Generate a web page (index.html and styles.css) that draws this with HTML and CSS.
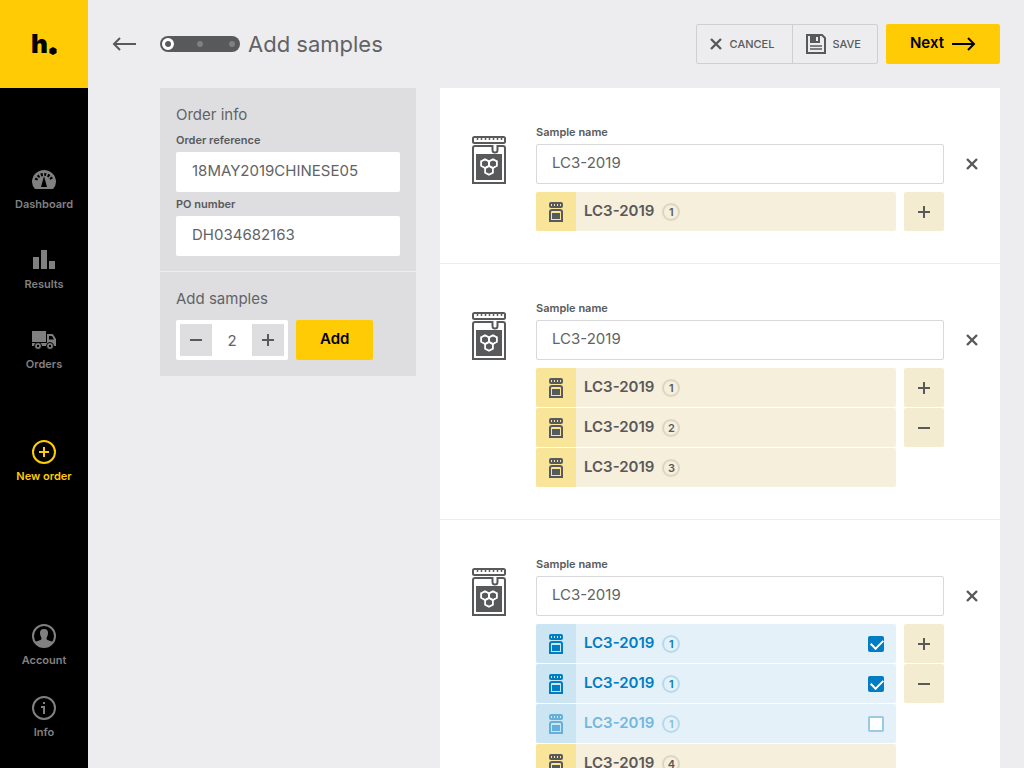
FILE: index.html
```
<!DOCTYPE html>
<html lang="en">
<head>
<meta charset="utf-8">
<meta name="viewport" content="width=device-width, initial-scale=1">
<title>Add samples</title>
<link rel="stylesheet" href="styles.css">
</head>

<body>
<!-- icons used more than once -->
<svg class="sprite" width="0" height="0">
	<symbol id="jar" viewBox="0 0 34 48">
		<path d="M1 2.500Q1 1 2.500 1H31.500Q33 1 33 2.500V5.500Q33 7 31.500 7H2.500Q1 7 1 5.500Z" fill="none" stroke="currentColor" stroke-width="2"/>
		<path d="M5.500 2V4M9.500 2V4M13.500 2V4M17.500 2V4M21.500 2V4M25.500 2V4M29.500 2V4" stroke="currentColor" stroke-width="1.500"/>
		<path d="M1 47V12Q1 10 3 10H20.500V14Q20.500 16.500 23 16.500Q25.500 16.500 25.500 14V10H31Q33 10 33 12V47Z" fill="none" stroke="currentColor" stroke-width="2"/>
		<path d="M4 18H30V44H4Z" fill="currentColor"/>
		<g fill="none" stroke="#fff" stroke-width="1.800">
			<path d="M13 23.200L16.900 25.400V29.800L13 32L9.100 29.800V25.400Z"/>
			<path d="M21 23.200L24.900 25.400V29.800L21 32L17.100 29.800V25.400Z"/>
			<path d="M17 30L20.900 32.200V36.600L17 38.800L13.100 36.600V32.200Z"/>
		</g>
	</symbol>
	<symbol id="vial" viewBox="0 0 14 20">
		<path d="M2 0H12Q14 0 14 2V4Q14 6 12 6H2Q0 6 0 4V2Q0 0 2 0ZM2 2V4H3V2ZM5 2V4H6V2ZM8 2V4H9V2ZM11 2V4H12V2Z" fill="currentColor" fill-rule="evenodd"/>
		<path d="M1 19V10Q1 8 3 8H11Q13 8 13 10V19Z" fill="none" stroke="currentColor" stroke-width="2"/>
		<path d="M3 11H11V17H3Z" fill="currentColor"/>
	</symbol>
	<symbol id="plus" viewBox="0 0 12 12"><path d="M0 6H12M6 0V12" stroke="currentColor" stroke-width="2"/></symbol>
	<symbol id="minus" viewBox="0 0 12 12"><path d="M0 6H12" stroke="currentColor" stroke-width="2"/></symbol>
	<symbol id="cross" viewBox="0 0 12 12"><path d="M1 1L11 11M11 1L1 11" stroke="currentColor" stroke-width="2.400"/></symbol>
</svg>

<div class="app">
	<aside class="sidebar">
		<a class="logo" href="#" aria-label="Home"><span>h</span><svg width="8" height="8" viewBox="0 0 8 8"><path d="M4 0L7.600 2V6L4 8L0.400 6V2Z"/></svg></a>

		<nav class="menu">
			<a href="#">
				<svg width="24" height="24" viewBox="0 0 24 24">
					<path d="M3 21Q0 17.500 0 14A12 12 0 0 1 24 14Q24 17.500 21 21Z" fill="currentColor"/>
					<path d="M12 8L15 19H9Z" fill="#000"/>
					<path d="M4 12A8.500 8.500 0 0 1 20 12" fill="none" stroke="#000" stroke-width="3" stroke-dasharray="2 1.500"/>
				</svg>
				Dashboard
			</a>
			<a href="#">
				<svg width="24" height="24" viewBox="0 0 24 24"><path d="M1 9H7V21H1ZM9 2H15V21H9ZM17 13H23V21H17Z" fill="currentColor"/></svg>
				Results
			</a>
			<a href="#">
				<svg width="24" height="24" viewBox="0 0 24 24">
					<path d="M0 3H14V14H0ZM15 6H20Q21 6 21.500 7L24 11V18H0V15H15ZM17 8V11.500H22L20 8Z" fill="currentColor" fill-rule="evenodd"/>
					<g fill="currentColor" stroke="#000"><circle cx="6" cy="18" r="3.500"/><circle cx="18" cy="18" r="3.500"/></g>
					<circle cx="6" cy="18" r="1.200"/><circle cx="18" cy="18" r="1.200"/>
				</svg>
				Orders
			</a>
		</nav>

		<nav class="menu menu-new">
			<a class="active" href="#">
				<svg width="24" height="24" viewBox="0 0 24 24" fill="none" stroke="currentColor" stroke-width="2"><circle cx="12" cy="12" r="11"/><path d="M7 12H17M12 7V17"/></svg>
				New order
			</a>
		</nav>

		<nav class="menu menu-bottom">
			<a href="#">
				<svg width="24" height="24" viewBox="0 0 24 24">
					<circle cx="12" cy="12" r="11" fill="none" stroke="currentColor" stroke-width="2"/>
					<path d="M12 5C15 5 16.300 7 16 9.500C15.800 12 14.500 13 14.500 14.500C14.500 17 20 16.500 21 18.500C19 21.500 15.500 23 12 23S5 21.500 3 18.500C4 16.500 9.500 17 9.500 14.500C9.500 13 8.200 12 8 9.500C7.700 7 9 5 12 5Z" fill="currentColor"/>
				</svg>
				Account
			</a>
			<a href="#">
				<svg width="24" height="24" viewBox="0 0 24 24" fill="none" stroke="currentColor" stroke-width="2"><circle cx="12" cy="12" r="11"/><path d="M9 11H12V18M11 7H13"/></svg>
				Info
			</a>
		</nav>
	</aside>

	<div class="page">
		<header class="topbar">
			<a class="back" href="#" aria-label="Back"><svg width="24" height="14" viewBox="0 0 24 14" fill="none" stroke="currentColor" stroke-width="2"><path d="M24 7H2M8 1L2 7L8 13"/></svg></a>
			<svg class="steps" width="80" height="16" viewBox="0 0 80 16">
				<rect width="80" height="16" rx="8" fill="#58595b"/>
				<circle cx="8" cy="8" r="4.500" fill="#58595b" stroke="#fff" stroke-width="3"/>
				<circle cx="40" cy="8" r="3" fill="#808083"/><circle cx="72" cy="8" r="3" fill="#808083"/>
			</svg>
			<h1>Add samples</h1>
			<div class="actions">
				<button type="button" class="btn-line"><svg width="12" height="12"><use href="#cross"/></svg>CANCEL</button>
				<button type="button" class="btn-line btn-save">
					<svg width="20" height="20" viewBox="0 0 20 20">
						<path d="M1 1H16L19 4V19H1Z" fill="none" stroke="currentColor" stroke-width="2"/>
						<path d="M4 1H14V9H4ZM10 3V7H12V3Z" fill="currentColor" fill-rule="evenodd"/>
						<path d="M4 12H16M4 15H16" stroke="currentColor" stroke-width="1.500"/>
					</svg>SAVE
				</button>
			</div>
			<button type="button" class="btn btn-next">Next<svg width="24" height="14" viewBox="0 0 24 14" fill="none" stroke="currentColor" stroke-width="2"><path d="M0 7H22M16 1L22 7L16 13"/></svg></button>
		</header>

		<main class="columns">
			<form class="panel">
				<section>
					<h2>Order info</h2>
					<label for="ref">Order reference</label>
					<input type="text" id="ref" value="18MAY2019CHINESE05">
					<label for="po">PO number</label>
					<input type="text" id="po" value="DH034682163">
				</section>
				<section>
					<h2>Add samples</h2>
					<div class="add">
						<div class="counter">
							<button type="button" aria-label="Less"><svg width="12" height="12"><use href="#minus"/></svg></button>
							<input type="text" value="2" aria-label="Number of samples">
							<button type="button" aria-label="More"><svg width="12" height="12"><use href="#plus"/></svg></button>
						</div>
						<button type="button" class="btn btn-add">Add</button>
					</div>
				</section>
			</form>

			<form class="samples">
				<section class="sample">
					<svg class="jar" width="34" height="48"><use href="#jar"/></svg>
					<div class="fields">
						<label for="name1">Sample name</label>
						<input type="text" id="name1" value="LC3-2019">
						<div class="vials">
							<ul>
								<li><i><svg width="14" height="20"><use href="#vial"/></svg></i><b>LC3-2019</b><em>1</em></li>
							</ul>
							<div class="tools">
								<button type="button" aria-label="Add vial"><svg width="12" height="12"><use href="#plus"/></svg></button>
							</div>
						</div>
					</div>
					<button type="button" class="remove" aria-label="Remove sample"><svg width="12" height="12"><use href="#cross"/></svg></button>
				</section>

				<section class="sample">
					<svg class="jar" width="34" height="48"><use href="#jar"/></svg>
					<div class="fields">
						<label for="name2">Sample name</label>
						<input type="text" id="name2" value="LC3-2019">
						<div class="vials">
							<ul>
								<li><i><svg width="14" height="20"><use href="#vial"/></svg></i><b>LC3-2019</b><em>1</em></li>
								<li><i><svg width="14" height="20"><use href="#vial"/></svg></i><b>LC3-2019</b><em>2</em></li>
								<li><i><svg width="14" height="20"><use href="#vial"/></svg></i><b>LC3-2019</b><em>3</em></li>
							</ul>
							<div class="tools">
								<button type="button" aria-label="Add vial"><svg width="12" height="12"><use href="#plus"/></svg></button>
								<button type="button" aria-label="Remove vial"><svg width="12" height="12"><use href="#minus"/></svg></button>
							</div>
						</div>
					</div>
					<button type="button" class="remove" aria-label="Remove sample"><svg width="12" height="12"><use href="#cross"/></svg></button>
				</section>

				<section class="sample">
					<svg class="jar" width="34" height="48"><use href="#jar"/></svg>
					<div class="fields">
						<label for="name3">Sample name</label>
						<input type="text" id="name3" value="LC3-2019">
						<div class="vials">
							<ul>
								<li class="blue"><i><svg width="14" height="20"><use href="#vial"/></svg></i><label for="v1">LC3-2019</label><em>1</em><input type="checkbox" id="v1" checked></li>
								<li class="blue"><i><svg width="14" height="20"><use href="#vial"/></svg></i><label for="v2">LC3-2019</label><em>1</em><input type="checkbox" id="v2" checked></li>
								<li class="blue off"><i><svg width="14" height="20"><use href="#vial"/></svg></i><label for="v3">LC3-2019</label><em>1</em><input type="checkbox" id="v3"></li>
								<li><i><svg width="14" height="20"><use href="#vial"/></svg></i><b>LC3-2019</b><em>4</em></li>
							</ul>
							<div class="tools">
								<button type="button" aria-label="Add vial"><svg width="12" height="12"><use href="#plus"/></svg></button>
								<button type="button" aria-label="Remove vial"><svg width="12" height="12"><use href="#minus"/></svg></button>
							</div>
						</div>
					</div>
					<button type="button" class="remove" aria-label="Remove sample"><svg width="12" height="12"><use href="#cross"/></svg></button>
				</section>
			</form>
		</main>
	</div>
</div>
</body>
</html>
```
FILE: styles.css
```
*{margin:0; padding:0; box-sizing:border-box;}
body{font-family:Inter, "Liberation Sans", sans-serif; font-size:15px; color:#58595b; background:#ededef;}
button, input{font:inherit; color:inherit; border:0; background:none;}
button{cursor:pointer;}
a{color:inherit; text-decoration:none;}
svg{display:block; flex:none;}
ul{list-style:none;}
i, em{font-style:normal;}
.sprite{position:absolute;}

.app{display:flex; height:100vh;}

/* sidebar */
.sidebar{width:88px; flex:none; display:flex; flex-direction:column; background:#000; color:#808080; padding-bottom:24px;}
.logo{height:88px; flex:none; display:flex; align-items:center; justify-content:center; background:#ffcb05; color:#000;}
.logo span{font-size:26px; font-weight:900; line-height:32px;}
.logo svg{margin:13px 0 0 1px;}
.menu{display:flex; flex-direction:column; gap:32px; padding-top:80px;}
.menu a{display:flex; flex-direction:column; align-items:center; height:48px; font-size:11px; font-weight:600; line-height:24px;}
.menu-new{padding-top:64px;}
.menu-bottom{margin-top:auto; padding-top:0; gap:24px;}
.menu .active{color:#ffcb05;}

/* top bar */
.page{flex:1; min-width:0; overflow-y:auto; scrollbar-width:none;}
.topbar{display:flex; align-items:center; height:88px; padding:0 24px;}
.steps{margin:0 8px 0 24px;}
h1{font-size:22px; font-weight:400; line-height:32px; color:#626365;}
.actions{display:flex; margin:0 8px 0 auto; border:1px solid #cfcfd1; border-radius:2px;}
.btn-line{display:flex; align-items:center; gap:8px; height:38px; padding:0 18px 0 13px; font-size:11px; font-weight:500;}
.btn-save{border-left:1px solid #cfcfd1; gap:6px; padding:0 16px 0 13px;}
.btn{height:40px; padding:0 24px 3px; border-radius:2px; background:#ffcb05; color:#000; font-weight:600;}
.btn-next{display:flex; align-items:center; gap:8px;}
.btn-next svg{margin-top:3px;}

/* columns */
.columns{display:flex; align-items:flex-start; gap:24px; padding:0 24px 24px 72px;}
.panel{width:256px; flex:none; background:#dedee0;}
.panel section{padding:16px;}
.panel section + section{border-top:1px solid #ededef;}
.panel section:first-child{padding-bottom:15px;}
h2{padding-bottom:2px; font-size:15px; font-weight:400; line-height:22px; color:#626365;}
label{display:block; font-size:11px; font-weight:600; line-height:24px;}
input[type=text]{display:block; width:100%; height:40px; padding:0 16px 3px; border-radius:2px; background:#fff; font-weight:400; color:#626365;}
.add{display:flex; gap:8px; margin-top:8px;}
.counter{display:flex; width:112px; padding:4px; border-radius:2px; background:#fff;}
.counter button{width:32px; height:32px; flex:none; display:flex; align-items:center; justify-content:center; background:#dedee0;}
.counter input[type=text]{height:32px; padding:0; text-align:center;}

/* samples */
.samples{flex:1; min-width:0; background:#fff;}
.sample{display:flex; padding:32px 0 31px 32px; border-bottom:1px solid #ededef;}
.jar{margin:16px 30px 0 0;}
.fields{flex:1; min-width:0;}
.fields > input[type=text]{border:1px solid #d9d9db; padding:0 15px 3px;}
.remove{width:56px; height:40px; margin-top:24px; display:flex; align-items:center; justify-content:center;}
.vials{display:flex; gap:8px; margin-top:8px;}
.vials ul{flex:1;}
.vials li{display:flex; align-items:center; height:39px; margin-bottom:1px; border-radius:2px; background:#f6efdc;}
.vials i{width:40px; height:39px; display:flex; align-items:center; justify-content:center; border-radius:2px 0 0 2px; background:#f9e59a;}
.vials b, .vials label{margin:0 8px; padding-bottom:2px; font-size:15px; font-weight:600; line-height:24px;}
.vials em{width:18px; height:18px; border:2px solid #ddd5c3; border-radius:50%; font-size:11px; font-weight:600; line-height:14px; text-align:center;}
.vials .blue{background:#e4f1f9; color:#007dc3;}
.blue i{background:#cce5f3;}
.blue em{border-color:#b5daed;}
.off svg, .off label{opacity:.5;}
.off em{color:#80bee1;}
.blue input{appearance:none; width:16px; height:16px; margin:0 12px 0 auto; border:2px solid #99cbe7; border-radius:2px; background:#fff;}
.blue input:checked{border-color:#007dc3; background:#007dc3;}
.blue input:checked::before{content:""; display:block; width:10px; height:6px; margin:1px; border:solid #fff; border-width:0 0 2px 2px; transform:rotate(-45deg);}
.tools button{width:40px; height:39px; margin-bottom:1px; display:flex; align-items:center; justify-content:center; border-radius:2px; background:#f4ecd0;}
```
